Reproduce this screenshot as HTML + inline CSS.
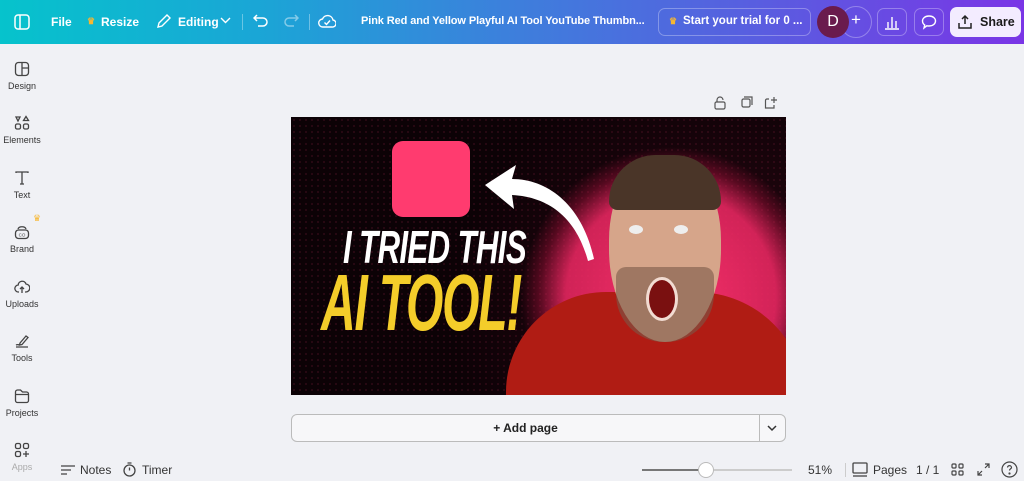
<!DOCTYPE html>
<html><head><meta charset="utf-8"><style>
*{box-sizing:border-box;margin:0;padding:0}
body{width:1024px;height:481px;overflow:hidden;background:#f0f1f5;font-family:"Liberation Sans",sans-serif;position:relative;color:#0d1216}
.hdr{position:absolute;left:0;top:0;width:1024px;height:44px;background:linear-gradient(90deg,#06c3cc 0%,#1aa6d6 25%,#3d7fdc 50%,#5a5ce0 75%,#7a35e6 100%);color:#fff;font-weight:bold;font-size:12px}
.hdr span{position:absolute;top:15px;white-space:nowrap}
.btn{position:absolute;top:8px;height:28px;border:1px solid rgba(255,255,255,.3);border-radius:7px}
.side{position:absolute;left:0;top:44px;width:44px;height:437px}
.si{position:absolute;left:0;width:44px;text-align:center;font-size:9px;color:#333}
.si svg{display:block;margin:0 auto 4px}
.bot{position:absolute;top:463px;font-size:12px;color:#333}
</style></head><body>
<div class="hdr">
<svg style="position:absolute;left:14px;top:14px" width="16" height="16" viewBox="0 0 16 16" fill="none" stroke="#fff" stroke-width="1.5"><rect x="1" y="1" width="14" height="14" rx="3"/><line x1="6" y1="1" x2="6" y2="15"/></svg>
<span style="left:51px">File</span>
<span style="left:87px;color:#f7b731;font-size:9px;top:16px">♛</span>
<span style="left:101px">Resize</span>
<svg style="position:absolute;left:156px;top:14px" width="15" height="15" viewBox="0 0 15 15" fill="none" stroke="#fff" stroke-width="1.4"><path d="M2 13l1-4 8-8 3 3-8 8z"/></svg>
<span style="left:178px">Editing</span>
<svg style="position:absolute;left:220px;top:17px" width="11" height="8" viewBox="0 0 11 8" fill="none" stroke="#fff" stroke-width="1.4"><path d="M1 1l4.5 4.5L10 1"/></svg>
<div style="position:absolute;left:242px;top:14px;width:1px;height:16px;background:rgba(255,255,255,.35)"></div>
<svg style="position:absolute;left:253px;top:14px" width="16" height="14" viewBox="0 0 16 14" fill="none" stroke="#fff" stroke-width="1.5"><path d="M4 1L1 4l3 3M1 4h9a4 4 0 010 8H5"/></svg>
<svg style="position:absolute;left:283px;top:14px" width="16" height="14" viewBox="0 0 16 14" fill="none" stroke="rgba(255,255,255,.45)" stroke-width="1.5"><path d="M12 1l3 3-3 3M15 4H6a4 4 0 000 8h5"/></svg>
<div style="position:absolute;left:309px;top:14px;width:1px;height:16px;background:rgba(255,255,255,.35)"></div>
<svg style="position:absolute;left:318px;top:13px" width="18" height="16" viewBox="0 0 18 16" fill="none" stroke="#fff" stroke-width="1.4"><path d="M5 14a4 4 0 01-.5-8A5.5 5.5 0 0115 7a3.5 3.5 0 01-1 7z"/><path d="M6.5 9.5l2 2 3.5-4"/></svg>
<span style="left:361px;font-size:11px;letter-spacing:-.1px">Pink Red and Yellow Playful AI Tool YouTube Thumbn...</span>
<div class="btn" style="left:658px;width:153px"></div>
<span style="left:669px;color:#f7b731;font-size:9px;top:16px">♛</span>
<span style="left:683px;font-size:11.5px">Start your trial for 0 ...</span>
<div style="position:absolute;left:840px;top:6px;width:32px;height:32px;border-radius:50%;border:1px solid rgba(255,255,255,.3)"></div>
<div style="position:absolute;left:817px;top:6px;width:32px;height:32px;border-radius:50%;background:#6a1b4d;font-weight:normal;font-size:16px;text-align:center;line-height:32px">D</div>
<span style="left:851px;font-size:17px;top:10px;font-weight:normal">+</span>
<div class="btn" style="left:877px;width:30px"></div>
<svg style="position:absolute;left:884px;top:14px" width="16" height="16" viewBox="0 0 16 16" fill="none" stroke="#fff" stroke-width="1.4"><path d="M1 15h14M4 14V8M8 14V3M12 14V7"/></svg>
<div class="btn" style="left:914px;width:30px"></div>
<svg style="position:absolute;left:921px;top:14px" width="16" height="16" viewBox="0 0 16 16" fill="none" stroke="#fff" stroke-width="1.4"><path d="M8 2c4 0 6.5 2.3 6.5 5S12 12 8 12c-.8 0-1.5 0-2.2-.2L3 14l.7-3A5 5 0 011.5 7C1.5 4.3 4 2 8 2z"/></svg>
<div style="position:absolute;left:950px;top:7px;width:71px;height:30px;border-radius:7px;background:#f3ecff"></div>
<svg style="position:absolute;left:957px;top:14px" width="16" height="16" viewBox="0 0 16 16" fill="none" stroke="#222" stroke-width="1.5"><path d="M8 10V2M5 5l3-3 3 3M2 9v5h12V9"/></svg>
<span style="left:980px;color:#1a1a1a;font-size:12.5px">Share</span>
</div>

<div class="side">
<div class="si" style="top:17px"><svg width="16" height="16" viewBox="0 0 16 16" fill="none" stroke="#444" stroke-width="1.3"><rect x="1.5" y="1.5" width="13" height="13" rx="3"/><path d="M8 1.5v13M8 7h6.5"/></svg>Design</div>
<div class="si" style="top:71px"><svg width="16" height="16" viewBox="0 0 16 16" fill="none" stroke="#444" stroke-width="1.3"><path d="M2 2h4l-2 4z"/><path d="M12 1.5l2.5 4h-5z"/><rect x="1.5" y="9" width="5" height="5" rx="1.5"/><rect x="9.5" y="9" width="5" height="5" rx="1.5"/></svg>Elements</div>
<div class="si" style="top:126px"><svg width="16" height="16" viewBox="0 0 16 16" fill="none" stroke="#444" stroke-width="1.3"><path d="M2 3V2h12v1M8 2v12M6 14h4"/></svg>Text</div>
<div style="position:absolute;left:33px;top:169px;color:#f7b731;font-size:9px">♛</div>
<div class="si" style="top:180px"><svg width="16" height="16" viewBox="0 0 16 16" fill="none" stroke="#444" stroke-width="1.3"><rect x="1.5" y="6" width="13" height="8.5" rx="3"/><path d="M4 5c1-3 7-3 8 0"/><text x="8" y="12.5" font-size="4.5" text-anchor="middle" fill="#444" stroke="none">CO</text></svg>Brand</div>
<div class="si" style="top:235px"><svg width="16" height="16" viewBox="0 0 16 16" fill="none" stroke="#444" stroke-width="1.3"><path d="M5 13H4.5a3.5 3.5 0 01-.3-7A4 4 0 0112 5a3.5 3.5 0 01-.5 8H11M8 14V8M6 10l2-2 2 2"/></svg>Uploads</div>
<div class="si" style="top:289px"><svg width="16" height="16" viewBox="0 0 16 16" fill="none" stroke="#444" stroke-width="1.3"><path d="M6 10l6-7 2 1.5-6 7-2.5.5zM2 14h12M2 12c2-1 3 0 4 0"/></svg>Tools</div>
<div class="si" style="top:344px"><svg width="16" height="16" viewBox="0 0 16 16" fill="none" stroke="#444" stroke-width="1.3"><path d="M1.5 4a2 2 0 012-2h3l2 2h4a2 2 0 012 2v6.5a2 2 0 01-2 2h-9a2 2 0 01-2-2zM1.5 6.5h13"/></svg>Projects</div>
<div class="si" style="top:398px;color:#aaa"><svg width="16" height="16" viewBox="0 0 16 16" fill="none" stroke="#444" stroke-width="1.3"><rect x="1.5" y="1.5" width="5" height="5" rx="1.5"/><rect x="9.5" y="1.5" width="5" height="5" rx="1.5"/><rect x="1.5" y="9.5" width="5" height="5" rx="1.5"/><path d="M12 9v6M9 12h6"/></svg>Apps</div>
</div>

<svg style="position:absolute;left:714px;top:96px" width="70" height="14" viewBox="0 0 70 14" fill="none" stroke="#555" stroke-width="1.2"><rect x="1" y="6" width="10" height="7" rx="1.5"/><path d="M3 6V4a3 3 0 016 0"/><rect x="28" y="3" width="8" height="8" rx="1.5"/><path d="M30 1h8v8"/><path d="M55 3h-2a1.5 1.5 0 00-1.5 1.5v7.5h8.5V9M60 1v6M57 4h6"/></svg>

<div style="position:absolute;left:291px;top:117px;width:495px;height:278px;overflow:hidden;background:radial-gradient(ellipse 260px 260px at 420px 200px,#3a0818 0%,#1c040c 50%,#0c0206 100%)">
<div style="position:absolute;left:0;top:0;width:495px;height:278px;background:repeating-radial-gradient(circle at 3px 3px,rgba(110,25,50,.35) 0 1px,transparent 1px 5px);background-size:6px 6px"></div>
<div style="position:absolute;left:230px;top:30px;width:300px;height:300px;border-radius:50%;background:radial-gradient(closest-side,rgba(255,50,110,.95) 0%,rgba(240,40,100,.85) 70%,rgba(200,20,70,.35) 88%,transparent 100%)"></div>
<div style="position:absolute;left:101px;top:24px;width:78px;height:76px;background:#ff3b6f;border-radius:11px"></div>
<svg style="position:absolute;left:190px;top:48px" width="125" height="100" viewBox="0 0 125 100"><path d="M4 20L35 0l-4 14c35 0 70 25 82 80l-6 2C96 55 70 32 31 30l2 14z" fill="#fff"/></svg>
<div style="position:absolute;left:52px;top:103px;font:italic bold 46px 'Liberation Sans',sans-serif;color:#fff;transform:scaleX(.68);transform-origin:left;letter-spacing:-1px;white-space:nowrap">I TRIED THIS</div>
<div style="position:absolute;left:30px;top:140px;font:italic bold 80px 'Liberation Sans',sans-serif;color:#f4cd2a;transform:scaleX(.6);transform-origin:left;letter-spacing:-2px;white-space:nowrap">AI TOOL!</div>
<div style="position:absolute;left:215px;top:175px;width:300px;height:150px;background:#b01c14;border-radius:100px 110px 0 0"></div>
<div style="position:absolute;left:318px;top:40px;width:112px;height:185px;background:#d6a58a;border-radius:45% 45% 50% 50%"></div>
<div style="position:absolute;left:318px;top:38px;width:112px;height:55px;background:#4a3528;border-radius:56px 56px 10px 10px"></div>
<div style="position:absolute;left:325px;top:150px;width:98px;height:75px;background:#7a5848;border-radius:10px 10px 48px 48px;opacity:.6"></div>
<div style="position:absolute;left:355px;top:160px;width:32px;height:44px;background:#7a1010;border-radius:50%;border:3px solid #f2dcd2"></div>
<div style="position:absolute;left:338px;top:108px;width:14px;height:9px;background:#eee;border-radius:50%"></div>
<div style="position:absolute;left:383px;top:108px;width:14px;height:9px;background:#eee;border-radius:50%"></div>
</div>

<div style="position:absolute;left:291px;top:414px;width:495px;height:28px;border:1px solid #bbb;border-radius:6px;background:#f7f7f9;font-size:12px;font-weight:bold;text-align:center;line-height:26px;color:#222"><span style="position:absolute;left:0;width:467px">+ Add page</span><div style="position:absolute;left:467px;top:0;width:1px;height:26px;background:#bbb"></div><svg style="position:absolute;left:475px;top:10px" width="10" height="7" viewBox="0 0 10 7" fill="none" stroke="#333" stroke-width="1.5"><path d="M1 1l4 4 4-4"/></svg></div>

<svg style="position:absolute;left:60px;top:464px" width="16" height="12" viewBox="0 0 16 12" fill="none" stroke="#444" stroke-width="1.3"><path d="M1 2h14M1 6h10M1 10h6"/></svg>
<div class="bot" style="left:80px">Notes</div>
<svg style="position:absolute;left:122px;top:462px" width="15" height="15" viewBox="0 0 15 15" fill="none" stroke="#444" stroke-width="1.3"><circle cx="7.5" cy="8.5" r="5.5"/><path d="M7.5 8.5V5.5M5.5 1h4"/></svg>
<div class="bot" style="left:142px">Timer</div>
<div style="position:absolute;left:642px;top:469px;width:150px;height:2px;background:#ccc"></div>
<div style="position:absolute;left:642px;top:469px;width:64px;height:2px;background:#777"></div>
<div style="position:absolute;left:698px;top:462px;width:16px;height:16px;border-radius:50%;background:#fff;border:1px solid #bbb"></div>
<div class="bot" style="left:808px">51%</div>
<div style="position:absolute;left:845px;top:463px;width:1px;height:14px;background:#ccc"></div>
<svg style="position:absolute;left:852px;top:462px" width="16" height="16" viewBox="0 0 16 16" fill="none" stroke="#444" stroke-width="1.3"><rect x="1" y="1" width="14" height="10" rx="1"/><path d="M1 14h14"/></svg>
<div class="bot" style="left:873px">Pages</div>
<div class="bot" style="left:916px">1 / 1</div>
<svg style="position:absolute;left:951px;top:463px" width="13" height="13" viewBox="0 0 13 13" fill="none" stroke="#444" stroke-width="1.2"><rect x="1" y="1" width="4" height="4" rx="1"/><rect x="8" y="1" width="4" height="4" rx="1"/><rect x="1" y="8" width="4" height="4" rx="1"/><rect x="8" y="8" width="4" height="4" rx="1"/></svg>
<svg style="position:absolute;left:977px;top:463px" width="13" height="13" viewBox="0 0 13 13" fill="none" stroke="#444" stroke-width="1.2"><path d="M8 1h4v4M12 1L8 5M5 12H1V8M1 12l4-4"/></svg>
<svg style="position:absolute;left:1001px;top:461px" width="17" height="17" viewBox="0 0 17 17" fill="none" stroke="#444" stroke-width="1.2"><circle cx="8.5" cy="8.5" r="7.5"/><path d="M6.5 6.5a2 2 0 114 .3c-.5 1-2 1.2-2 2.7"/><circle cx="8.5" cy="12.5" r=".5" fill="#444"/></svg>
</body></html>
